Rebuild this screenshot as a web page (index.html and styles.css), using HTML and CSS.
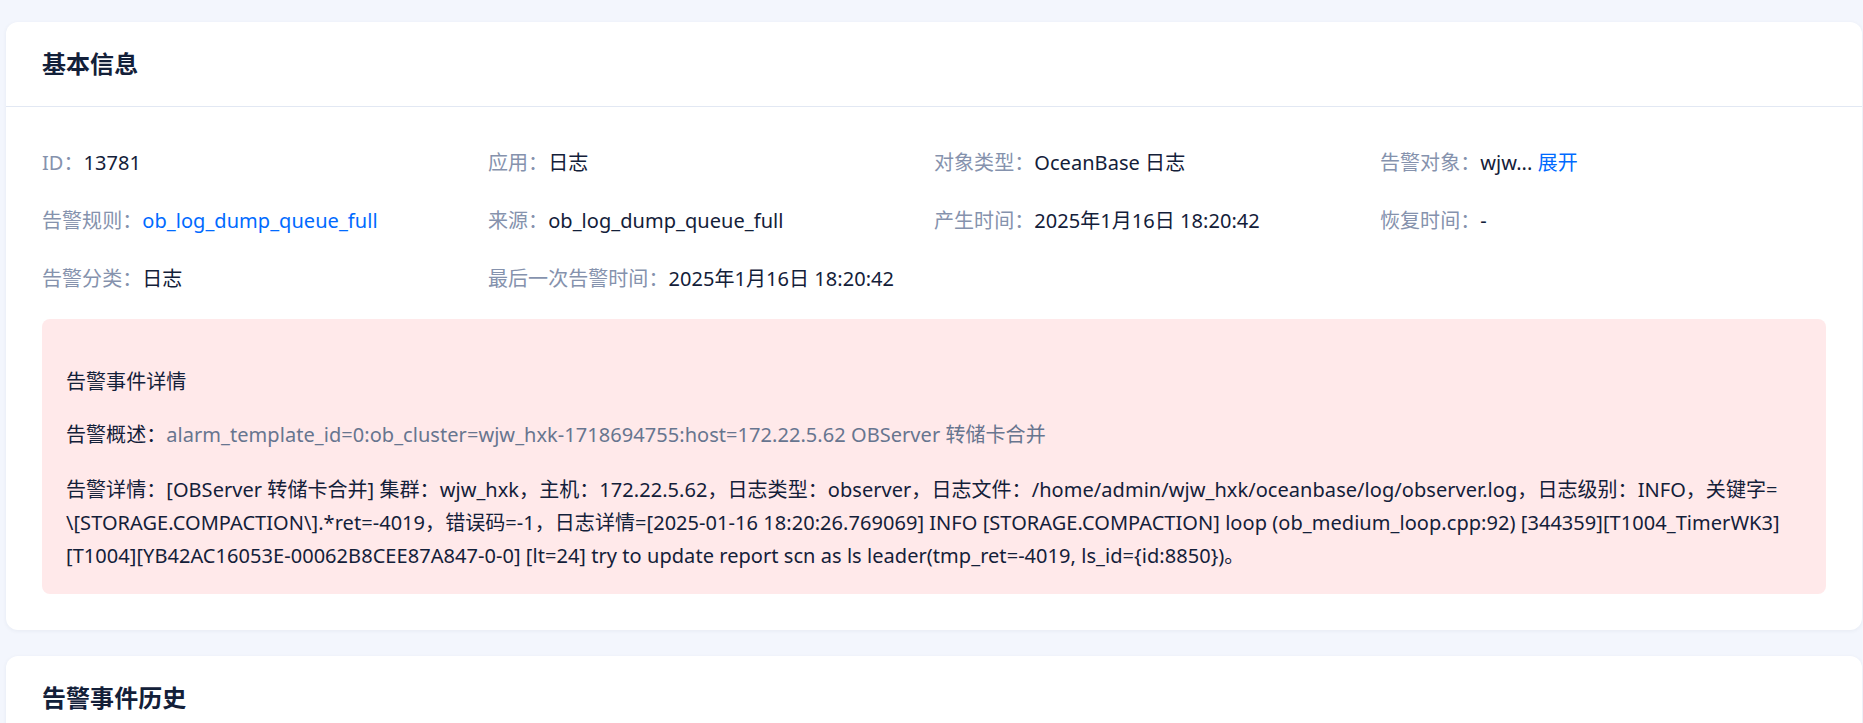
FILE: index.html
```html
<!DOCTYPE html>
<html lang="zh-CN">
<head>
    <meta charset="UTF-8">
    <meta name="viewport" content="width=device-width, initial-scale=1.0">
    <title>告警详情</title>
    <link rel="stylesheet" href="styles.css">
</head>
<body>
    <div class="card">
        <div class="card-head">基本信息</div>
        <div class="card-body">
            <div class="info-grid">
                <div class="info-item"><span class="label">ID：</span><span class="value">13781</span></div>
                <div class="info-item"><span class="label">应用：</span><span class="value">日志</span></div>
                <div class="info-item"><span class="label">对象类型：</span><span class="value">OceanBase 日志</span></div>
                <div class="info-item"><span class="label">告警对象：</span><span class="value">wjw... <a class="link" href="#">展开</a></span></div>

                <div class="info-item"><span class="label">告警规则：</span><a class="link" href="#">ob_log_dump_queue_full</a></div>
                <div class="info-item"><span class="label">来源：</span><span class="value">ob_log_dump_queue_full</span></div>
                <div class="info-item"><span class="label">产生时间：</span><span class="value">2025年1月16日 18:20:42</span></div>
                <div class="info-item"><span class="label">恢复时间：</span><span class="value">-</span></div>

                <div class="info-item"><span class="label">告警分类：</span><span class="value">日志</span></div>
                <div class="info-item"><span class="label">最后一次告警时间：</span><span class="value">2025年1月16日 18:20:42</span></div>
            </div>

            <div class="event-box">
                <div class="event-title">告警事件详情</div>
                <div class="event-summary">告警概述：<span class="muted">alarm_template_id=0:ob_cluster=wjw_hxk-1718694755:host=172.22.5.62 OBServer 转储卡合并</span></div>
                <div class="event-detail">告警详情：[OBServer 转储卡合并] 集群：wjw_hxk，主机：172.22.5.62，日志类型：observer，日志文件：/home/admin/wjw_hxk/oceanbase/log/observer.log，日志级别：INFO，关键字=<wbr><span class="nobr">\[STORAGE.COMPACTION\]</span>.*ret=-4019，错误码=-1，日志详情=[2025-01-16 18:20:26.769069] INFO [STORAGE.COMPACTION] loop (ob_medium_loop.cpp:92) [344359][T1004_TimerWK3][T1004][YB42AC16053E-00062B8CEE87A847-0-0] [lt=24] try to update report scn as ls leader(tmp_ret=-4019, ls_id={id:8850})。</div>
            </div>
        </div>
    </div>

    <div class="card">
        <div class="card-head">告警事件历史</div>
    </div>
</body>
</html>
```

FILE: styles.css
```css
body {
    margin: 0;
    padding: 22px 1px 0 6px;
    background-color: #f3f6fd;
    font-family: "Noto Sans", "Noto Sans CJK SC", sans-serif;
    font-size: 20px;
    letter-spacing: 0.05px;
    color: #132039;
    overflow: hidden;
}
.card {
    background: #fff;
    border-radius: 12px;
    box-shadow: 0 1px 4px rgba(30, 50, 90, 0.06);
    margin-bottom: 26px;
}
.card-head {
    padding: 27px 36px;
    line-height: 30px;
    font-size: 24px;
    font-weight: bold;
    border-bottom: 1px solid #e2e8f3;
}
.card-body {
    padding: 42px 36px 36px;
}
.info-grid {
    display: grid;
    grid-template-columns: repeat(4, 1fr);
    row-gap: 30px;
}
.info-item {
    line-height: 28px;
    white-space: nowrap;
}
.label {
    color: #8592ad;
}
.link {
    color: #006aff;
    text-decoration: none;
}
.event-box {
    margin-top: 26px;
    background: #ffe9ea;
    border-radius: 8px;
    padding: 20px 24px 22px;
    line-height: 33px;
}
.event-title {
    margin-top: 26px;
}
.event-summary {
    margin-top: 20px;
}
.muted {
    color: #67758f;
}
.event-detail {
    margin-top: 22px;
}
.nobr {
    white-space: nowrap;
}
```
